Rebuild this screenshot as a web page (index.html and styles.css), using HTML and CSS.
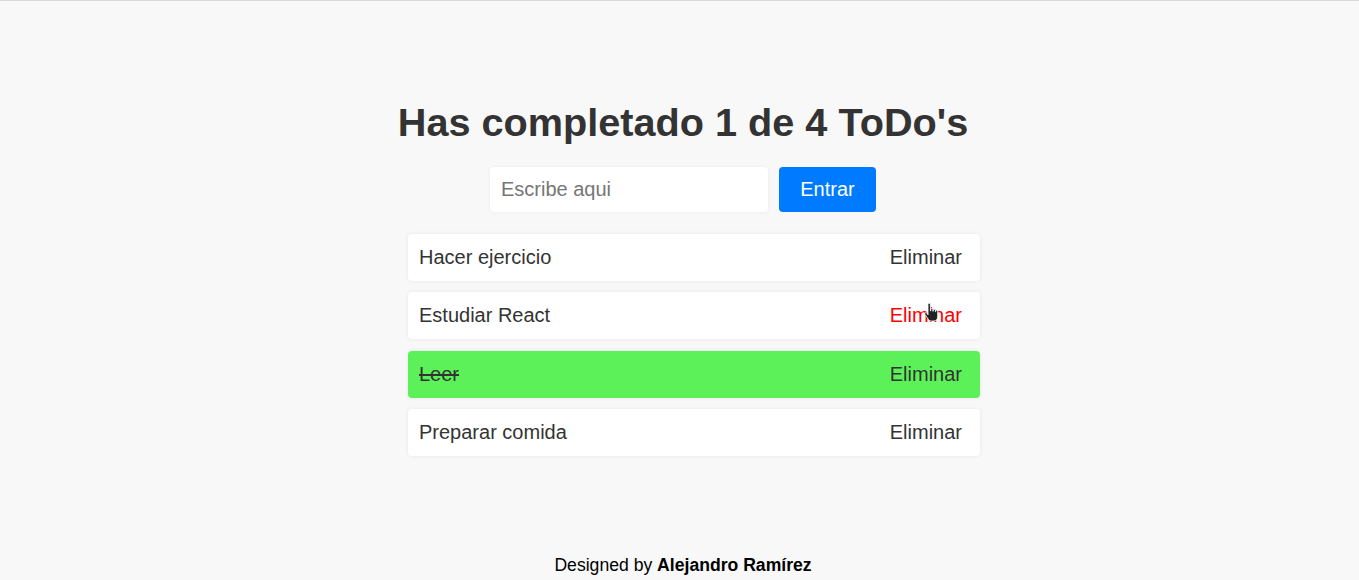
FILE: index.html
```html
<!DOCTYPE html>
<html lang="es">
<head>
<meta charset="utf-8">
<title>ToDo's</title>
<link rel="stylesheet" href="styles.css">
</head>
<body>
<div class="page">
  <main class="app">
    <h1 class="title">Has completado 1 de 4 ToDo's</h1>
    <form class="add-form">
      <input class="add-input" type="text" placeholder="Escribe aqui">
      <button class="add-btn" type="button">Entrar</button>
    </form>
    <ul class="todo-list">
      <li class="todo"><span class="todo-text">Hacer ejercicio</span><span class="todo-del">Eliminar</span></li>
      <li class="todo"><span class="todo-text">Estudiar React</span><span class="todo-del is-hover">Eliminar<svg class="cursor" width="14" height="20" viewBox="0 0 14 20"><path d="M4 1.5c0-.8.6-1.3 1.2-1.3S6.4.7 6.4 1.5V8h.3V6.6c0-.6.5-1 1.1-1s1.1.4 1.1 1V8.3h.3V7.3c0-.6.5-1 1.1-1s1.1.4 1.1 1v1.4h.3v-.6c0-.6.5-1 1-1s1 .4 1 1v5.4c0 2.6-1.5 4.5-4 4.5H7.2c-1.4 0-2.3-.7-3-1.8L1 11.4c-.4-.6-.2-1.3.3-1.6.6-.3 1.2-.1 1.6.4L4 11.8Z" fill="#222" stroke="#fff" stroke-width="0.8"/></svg></span></li>
      <li class="todo is-done"><span class="todo-text">Leer</span><span class="todo-del">Eliminar</span></li>
      <li class="todo"><span class="todo-text">Preparar comida</span><span class="todo-del">Eliminar</span></li>
    </ul>
  </main>
  <footer class="footer">Designed by <strong>Alejandro Ramírez</strong></footer>
</div>
</body>
</html>
```
FILE: styles.css
```css
* { box-sizing: border-box; }
html, body { margin: 0; padding: 0; }
body {
  background: #f8f8f8;
  border-top: 1px solid #d9d9d9;
  font-family: "Liberation Sans", Arial, sans-serif;
  color: #333;
}
.page {
  min-height: 579px;
  padding-left: 7px;
  display: flex;
  flex-direction: column;
  align-items: center;
}
.app {
  padding-top: 98px;
  display: flex;
  flex-direction: column;
  align-items: center;
}
.title {
  margin: 0;
  font-size: 39.65px;
  line-height: 46px;
  font-weight: 700;
  color: #333;
}
.add-form {
  margin-top: 22px;
  display: flex;
  gap: 11px;
}
.add-input {
  width: 278px;
  height: 45px;
  border: none;
  border-radius: 4px;
  background: #fff;
  box-shadow: 0 0 4px rgba(0,0,0,0.06);
  padding: 0 11px;
  font-family: inherit;
  font-size: 20px;
  color: #333;
  outline: none;
}
.add-input::placeholder { color: #767676; }
.add-btn {
  width: 97px;
  height: 45px;
  border: none;
  border-radius: 4px;
  background: #007bff;
  color: #fff;
  font-family: inherit;
  font-size: 20px;
  padding: 0;
}
.todo-list {
  list-style: none;
  margin: 22px 0 0;
  padding: 0 0 0 22px;
  width: 594px;
  display: flex;
  flex-direction: column;
  gap: 11.4px;
}
.todo {
  display: flex;
  justify-content: space-between;
  align-items: center;
  background: #fff;
  border-radius: 4px;
  box-shadow: 0 0 4px rgba(0,0,0,0.07);
  padding: 12px 18px 12px 11px;
  font-size: 20px;
  line-height: 23px;
}
.todo.is-done { background: #5cf158; }
.todo.is-done .todo-text { text-decoration: line-through; }
.todo-del { position: relative; color: #333; }
.todo-del.is-hover { color: #ff0000; }
.cursor {
  position: absolute;
  left: 34px;
  top: -1px;
}
.footer {
  margin-top: auto;
  padding-bottom: 5px;
  font-size: 17.6px;
  line-height: 20px;
  color: #000;
}
.footer strong { font-weight: 700; }
```
